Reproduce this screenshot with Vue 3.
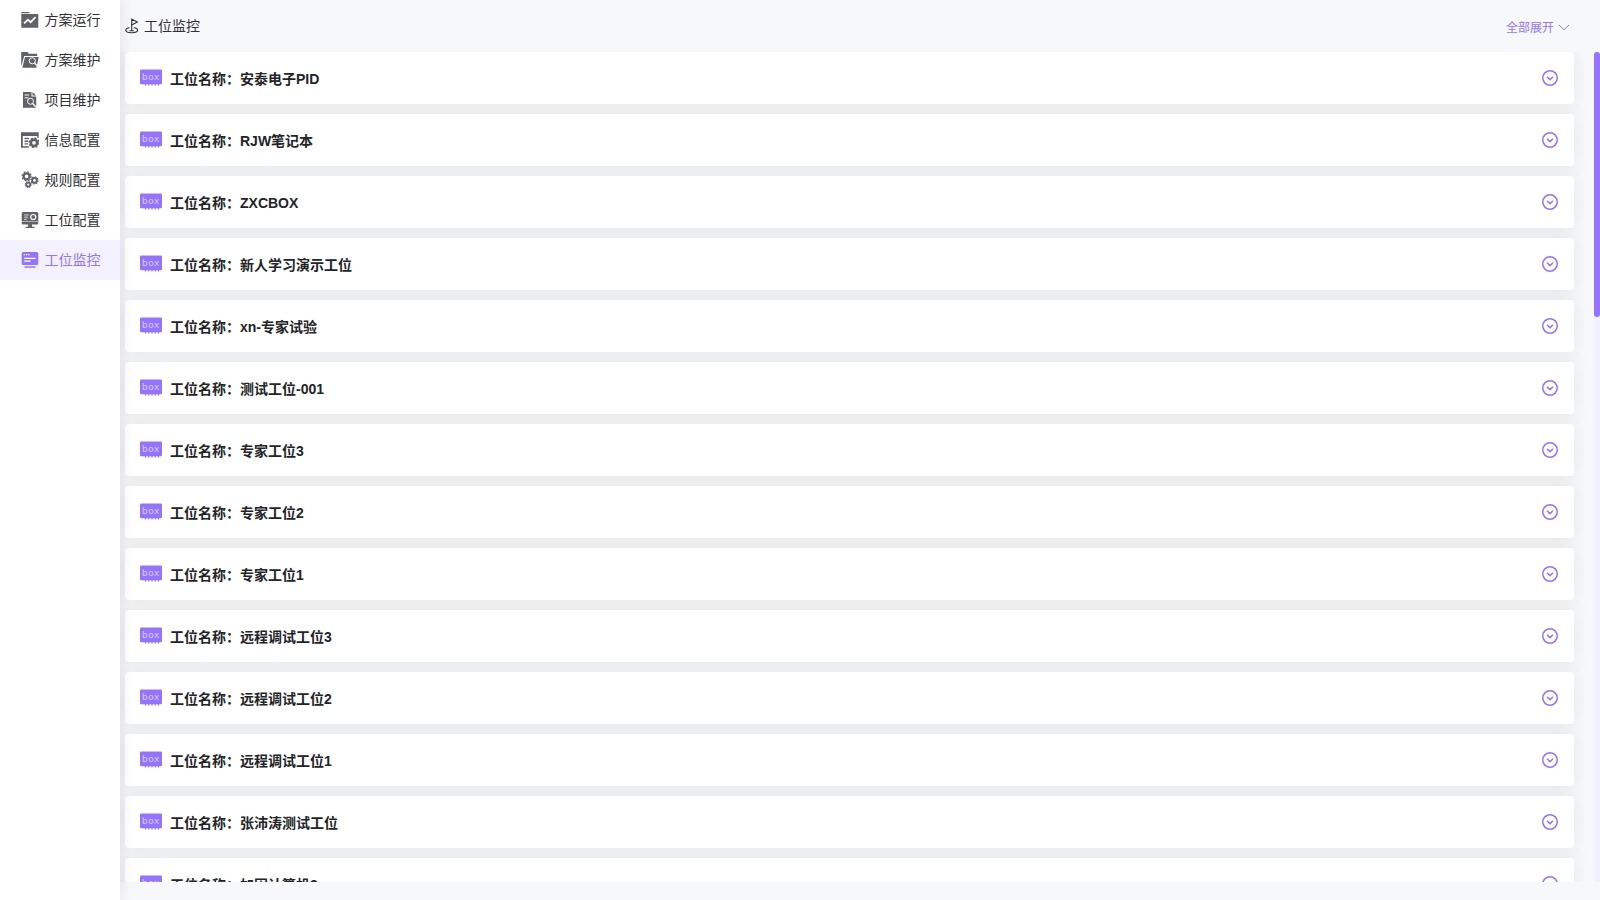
<script setup>
const menu = [
  { name: '方案运行', icon: 'run' },
  { name: '方案维护', icon: 'folder' },
  { name: '项目维护', icon: 'doc' },
  { name: '信息配置', icon: 'info' },
  { name: '规则配置', icon: 'gears' },
  { name: '工位配置', icon: 'station' },
  { name: '工位监控', icon: 'monitor', active: true },
]
const stations = [
  '安泰电子PID', 'RJW笔记本', 'ZXCBOX', '新人学习演示工位', 'xn-专家试验', '测试工位-001',
  '专家工位3', '专家工位2', '专家工位1', '远程调试工位3', '远程调试工位2', '远程调试工位1',
  '张沛涛测试工位', '加固计算机3',
]
</script>

<template>
  <div class="page">
    <nav class="side">
      <div v-for="m in menu" :key="m.name" class="item" :class="{ active: m.active }">
        <svg class="mi" viewBox="0 0 18 18" fill="currentColor">
          <template v-if="m.icon === 'run'">
            <path d="M.3 1h8v1.300h-8zM.3 3h17v13.700H.3z" />
            <path d="M3 12.400 7 8.600l2.600 2.600 5-5" fill="none" stroke="#fff" stroke-width="1.700" />
          </template>
          <template v-else-if="m.icon === 'folder'">
            <path d="M.2 15.500V1h6.500l1 1.700h8.500v2.200H3.200zM4 6h13.700l-2.200 10.700H1.300z" />
            <circle cx="11.300" cy="9.800" r="3.100" fill="none" stroke="#fff" stroke-width="1" />
            <path d="m13.500 12 3.700 4" stroke="#fff" stroke-width="1.300" />
          </template>
          <template v-else-if="m.icon === 'doc'">
            <path d="M2 1h8.500v4.600h4.700v11.100H2zM11.500 1l3.700 3.600h-3.700z" />
            <path d="M3.600 4h4.500M3.600 6.800h4" stroke="#fff" stroke-width="1" />
            <circle cx="9.500" cy="10.300" r="3" fill="none" stroke="#fff" stroke-width="1" />
            <path d="m11.600 12.500 3.800 3.900" stroke="#fff" stroke-width="1.300" />
          </template>
          <template v-else-if="m.icon === 'info'">
            <path d="M0 1.300h17.700v5.400h-1.500V5H1.800v10.300h6v1.400H0z" />
            <path d="M3.500 7.500h4.300M3.500 10.200h3.500M3.500 12.900h3.500" stroke="currentColor" stroke-width="1.400" />
            <circle cx="13" cy="11.800" r="3.200" fill="none" stroke="currentColor" stroke-width="2.700" />
            <circle cx="13" cy="11.800" r="4.800" fill="none" stroke="currentColor" stroke-width="1.500" stroke-dasharray="1.900 1.870" />
          </template>
          <template v-else-if="m.icon === 'gears'">
            <g fill="none" stroke="currentColor">
              <circle cx="5.600" cy="5.300" r="3" stroke-width="2.300" />
              <circle cx="5.600" cy="5.300" r="4.500" stroke-width="1.300" stroke-dasharray="1.750 1.784" />
              <circle cx="13.500" cy="9.400" r="2.400" stroke-width="2" />
              <circle cx="13.500" cy="9.400" r="3.600" stroke-width="1.100" stroke-dasharray="1.400 1.427" />
              <circle cx="7.200" cy="13.600" r="2" stroke-width="1.800" />
              <circle cx="7.200" cy="13.600" r="3.100" stroke-width="1" stroke-dasharray="1.200 1.235" />
            </g>
          </template>
          <template v-else-if="m.icon === 'station'">
            <path d="M2.200 1h13.600q1.500 0 1.500 1.500v7.900H.7V2.500Q.7 1 2.200 1zM.7 11.100h16.600v1.100q0 1.300-1.300 1.300H2Q.7 13.500.7 12.200zM7 13.300h4V16H7zM4.500 15.700h9V17h-9z" />
            <path d="M3.200 3.900h4.500M3.200 6.200h3.800M3.200 8.400h2.500" stroke="#fff" stroke-width=".8" />
            <circle cx="12.200" cy="6" r="2.500" fill="none" stroke="#fff" stroke-width="1.200" />
          </template>
          <template v-else>
            <path d="M2.300 1h13.400q1.600 0 1.600 1.600v9.800q0 1.600-1.600 1.600H2.300Q.7 14 .7 12.400V2.600Q.7 1 2.300 1zM3.500 15.200h11v1.500h-11z" />
            <path d="M2.800 3.700h1.300M5 3.700h1.300M7.200 3.700h1.300M3.200 7.400h11.500M3.200 10.200h6.500" stroke="#fff" stroke-width="1.300" />
          </template>
        </svg>
        <span>{{ m.name }}</span>
      </div>
    </nav>

    <main class="main">
      <header class="head">
        <svg class="flag" viewBox="0 0 14 16" fill="none" stroke="#303133" stroke-width="1.100">
          <path d="M6.700 13V1.200L12.300 4 6.700 7M4.600 9.800C2.300 10 .8 11 .8 12.300c0 1.500 2.600 2.500 5.900 2.500s5.900-1 5.900-2.500c0-1.300-1.500-2.300-3.800-2.500M4.500 12.800h4.400" />
        </svg>
        <span class="title">工位监控</span>
        <div class="expand">
          <span>全部展开</span>
          <svg viewBox="0 0 12 12" fill="none" stroke="currentColor"><path d="m1 3 5 4.800L11 3" /></svg>
        </div>
      </header>

      <div class="body">
        <div class="list">
          <section v-for="s in stations" :key="s" class="card">
            <svg class="box" viewBox="0 0 22 18">
              <path d="M1.300.5h19.400q1.300 0 1.300 1.300v12.200q0 1.200-1.300 1.200H19.200L18.400 17.300l-.8-2.100h-1.600L15.200 17.300l-.8-2.100h-1.600L12 17.300l-.8-2.100H9.600L8.800 17.300 8 15.200H6.400L5.600 17.300l-.8-2.100H1.300Q0 15.200 0 14V1.800Q0 .5 1.300.5z" fill="#9373ff" />
              <text x="2.100" y="11.200" fill="#d9cfff">box</text>
            </svg>
            <span class="name">工位名称：{{ s }}</span>
            <svg class="arrow" viewBox="0 0 16 16" fill="none" stroke="#9373ff" stroke-width="1.500">
              <circle cx="8" cy="8" r="7.250" />
              <path d="m5 6.800 3 2.800 3-2.800" />
            </svg>
          </section>
        </div>
        <div class="track"><div class="thumb"></div></div>
      </div>
    </main>
  </div>
</template>

<style>
body { overflow: hidden; }
</style>

<style scoped>
.page {
  display: flex;
  width: 1600px;
  height: 900px;
  background: #f7f8fa;
  color: #303133;
  font: 14px/20px "Liberation Sans", "Noto Sans CJK SC", sans-serif;
}
.side {
  width: 120px;
  flex: none;
  background: #fff;
  box-shadow: 0 0 14px rgba(0, 21, 41, .1);
  position: relative;
  z-index: 1;
}
.item {
  display: flex;
  align-items: center;
  height: 40px;
  padding-left: 20.500px;
  gap: 6px;
}
.mi { width: 18px; height: 18px; color: #606266; }
.item.active { background: #f3f0ff; color: #9373ff; }
.active .mi { color: #9373ff; }
.main { flex: 1; min-width: 0; }
.head {
  display: flex;
  align-items: center;
  height: 52px;
  padding: 0 30px 0 5px;
}
.flag { width: 14px; height: 16px; margin-right: 5px; }
.expand {
  display: flex;
  align-items: center;
  gap: 4px;
  margin-left: auto;
  padding-top: 4px;
  font-size: 12px;
  color: #9373ff;
}
.expand svg { width: 12px; height: 12px; }
.body {
  display: flex;
  justify-content: space-between;
  height: 830px;
  overflow: hidden;
}
.list {
  display: flex;
  flex-direction: column;
  gap: 10px;
  width: 1449px;
  margin-left: 5px;
}
.card {
  display: flex;
  align-items: center;
  flex: none;
  height: 52px;
  padding: 0 16px 0 15px;
  border-radius: 4px;
  background: #fff;
  box-shadow: 0 0 20px rgba(0, 0, 0, .078);
  clip-path: inset(-10px -30px -10px -30px);
}
.box { width: 22px; height: 18px; }
.box text { font: 9px "DejaVu Sans", sans-serif; letter-spacing: .5px; }
.name { margin-left: 8px; padding-top: 1px; font-weight: 700; color: #222427; }
.arrow { width: 16px; height: 16px; margin-left: auto; }
.track { width: 6px; background: #f3f0ff; }
.thumb { height: 265px; border-radius: 3px; background: #9373ff; }
</style>
